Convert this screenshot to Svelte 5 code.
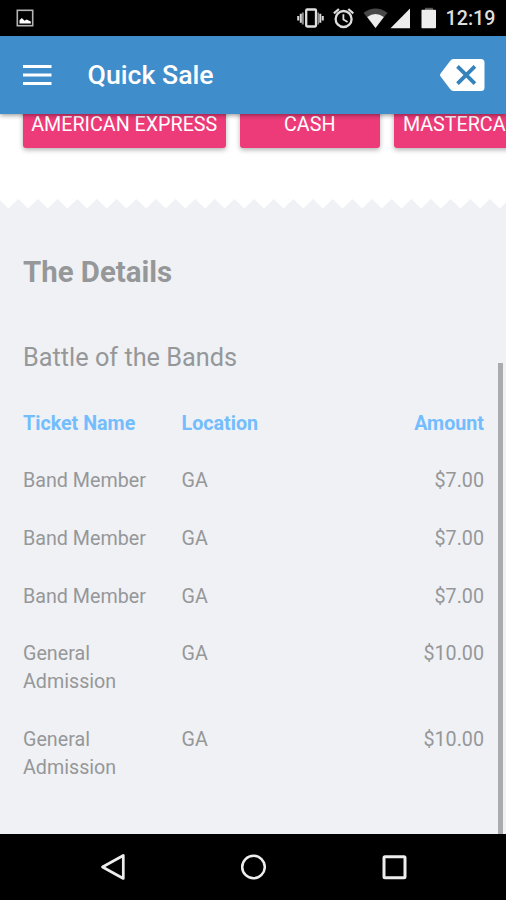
<script>
  const payments = [
    { label: 'AMERICAN EXPRESS', width: 202.5 },
    { label: 'CASH', width: 140.5 },
    { label: 'MASTERCARD', width: 145.5 }
  ];
  const tickets = [
    ['Band Member', 'GA', '$7.00'],
    ['Band Member', 'GA', '$7.00'],
    ['Band Member', 'GA', '$7.00'],
    ['General Admission', 'GA', '$10.00'],
    ['General Admission', 'GA', '$10.00']
  ];
  const period = 19.65;
  const teeth = Array.from({ length: 28 }, (_, i) => {
    const x = 8.5 + (i - 1) * period;
    return `L${x.toFixed(2)} 9.5L${(x + period / 2).toFixed(2)} 0`;
  }).join('');
</script>

<div class="screen">
  <div class="status">
    <svg class="photo" width="18" height="18" viewBox="0 0 18 18">
      <rect x="1.300" y="1.300" width="15.400" height="15.400" fill="none" stroke="#b4b4b4" stroke-width="1.600" />
      <path d="M3.500 14.500v-3.300l2.300-2.300 2.800 2.900 2-1.200 4.200 2v1.900z" fill="#fff" />
    </svg>
    <svg class="signals" width="142" height="24" viewBox="0 0 142 24">
      <g fill="#d8d8d8">
        <path d="M.2 11h2v4.500h-2zM2.800 8.800h2v9h-2zM22.300 8.800h2v9h-2zM24.800 11h2v4.500h-2z" />
        <path d="M4.800 7.500h2v12h-2zM20.500 7.500H22v12h-1.500z" opacity=".65" />
      </g>
      <rect x="9.200" y="4.500" width="9.800" height="17" rx="1" fill="none" stroke="#e0e0e0" stroke-width="2.300" />
      <g fill="none" stroke="#ddd">
        <circle cx="46.600" cy="14" r="8" stroke-width="2.300" />
        <path d="M36.900 8.400l5-4.400M56.300 8.400l-5-4.400" stroke-width="2.200" />
        <path d="M46.400 9.300v5.200l4.200 2.500" stroke-width="1.800" />
      </g>
      <path d="M66.500 7.700Q78.500 -.8 90.500 7.700L78.500 23z" fill="#484848" />
      <path d="M70.200 12Q78.500 6 86.800 12L78.500 23z" fill="#ededed" />
      <path d="M113 3.500v19.800H93.500z" fill="#ededed" />
      <path d="M128 2.800h8v2.500h-8z" fill="#555" />
      <rect x="124.500" y="4.800" width="14.500" height="18.500" rx=".8" fill="#ededed" />
    </svg>
    <span class="clock">12:19</span>
  </div>

  <header>
    <svg class="menu" width="30" height="22" viewBox="0 0 30 22">
      <path d="M0 2.500h28.500M0 11h28.500M0 19.500h28.500" stroke="#fff" stroke-width="3" />
    </svg>
    <h1>Quick Sale</h1>
    <svg class="clear" width="46" height="32" viewBox="0 0 46 32">
      <path d="M14.500 0H42q3.500 0 3.500 3.500v25q0 3.500-3.500 3.500H14.500q-2 0-3.400-2L1.400 17.300q-.8-1.300 0-2.600L11.100 2q1.400-2 3.400-2z" fill="#fff" />
      <path d="M18.500 7.300l17.400 17.400M35.900 7.300L18.500 24.700" stroke="#3483bb" stroke-width="3.800" />
    </svg>
  </header>

  <div class="payments">
    {#each payments as p}
      <button style="width: {p.width}px">{p.label}</button>
    {/each}
  </div>

  <svg class="edge" width="506" height="10" viewBox="0 0 506 10">
    <path d={`M-12 10${teeth}L530 10z`} fill="#eff1f5" />
  </svg>

  <main>
    <h2>The Details</h2>
    <h3>Battle of the Bands</h3>
    <div class="row head">
      <span>Ticket Name</span><span>Location</span><span>Amount</span>
    </div>
    {#each tickets as [name, location, amount]}
      <div class="row">
        <span>{name}</span><span>{location}</span><span>{amount}</span>
      </div>
    {/each}
    <div class="scrollbar"></div>
  </main>

  <nav>
    <svg width="26" height="28" viewBox="0 0 26 28">
      <path d="M23.300 2.500v23L2.500 14z" fill="none" stroke="#eee" stroke-width="2.700" stroke-linejoin="round" />
    </svg>
    <svg width="26" height="28" viewBox="0 0 26 28">
      <circle cx="13.500" cy="14" r="11.300" fill="none" stroke="#eee" stroke-width="2.500" />
    </svg>
    <svg width="26" height="28" viewBox="0 0 26 28">
      <rect x="3" y="3.700" width="21" height="21" rx="1" fill="none" stroke="#eee" stroke-width="3" />
    </svg>
  </nav>
</div>

<style>
  .screen {
    width: 506px;
    height: 900px;
    overflow: hidden;
    display: flex;
    flex-direction: column;
    background: #fff;
    font-family: Roboto, 'Liberation Sans', sans-serif;
    color: #969799;
  }
  .status {
    height: 36px;
    flex: none;
    box-sizing: border-box;
    display: flex;
    align-items: flex-start;
    background: #000;
    padding-left: 16px;
  }
  .photo { margin-top: 9px; }
  .signals { margin: 5px 0 0 263px; flex: none; }
  .clock {
    margin-left: 6.500px;
    font-size: 19.700px;
    line-height: 38px;
    font-weight: 500;
    color: #dedede;
    white-space: nowrap;
  }
  header {
    height: 78px;
    flex: none;
    box-sizing: border-box;
    display: flex;
    align-items: center;
    padding: 0 21px 0 23px;
    background: #408dcc;
    box-shadow: 0 1px 5px rgba(0, 0, 0, .45);
    z-index: 1;
  }
  h1 {
    margin: 0 auto 0 34.500px;
    font-size: 26.700px;
    font-weight: 500;
    line-height: 77px;
    color: #fff;
  }
  .payments {
    flex: none;
    display: flex;
    align-items: flex-end;
    gap: 14px;
    padding-left: 23px;
    height: 34px;
    margin-bottom: 50.500px;
  }
  button {
    flex: none;
    height: 50px;
    padding: 4px 0 0;
    border: 0;
    border-radius: 3px;
    background: #ed3b79;
    box-shadow: 0 2px 5px rgba(0, 0, 0, .3);
    font: 400 19.700px/46px Roboto, 'Liberation Sans', sans-serif;
    color: #fff;
    white-space: nowrap;
  }
  .edge { flex: none; display: block; }
  main {
    position: relative;
    flex: 1;
    min-height: 0;
    background: #eff1f5;
    padding: 0 22px 0 23px;
  }
  h2 {
    margin: 0;
    padding-top: 43px;
    font-size: 29.400px;
    line-height: 40px;
    font-weight: 700;
  }
  h3 {
    margin: 46px 0 17.500px;
    font-size: 25.300px;
    line-height: 40px;
    font-weight: 400;
  }
  .row {
    display: grid;
    grid-template-columns: 158.500px 1fr auto;
    padding: 14.750px 0;
    font-size: 19.700px;
    line-height: 28.100px;
  }
  .row span:first-child { padding-right: 28px; }
  .row span:last-child { text-align: right; }
  .head { font-weight: 700; color: #74bdfd; }
  .scrollbar {
    position: absolute;
    right: 3.500px;
    top: 154px;
    bottom: 0;
    width: 4.500px;
    background: #a9abae;
  }
  nav {
    height: 66.500px;
    flex: none;
    display: flex;
    justify-content: center;
    align-items: center;
    gap: 114.500px;
    background: #000;
  }
</style>
